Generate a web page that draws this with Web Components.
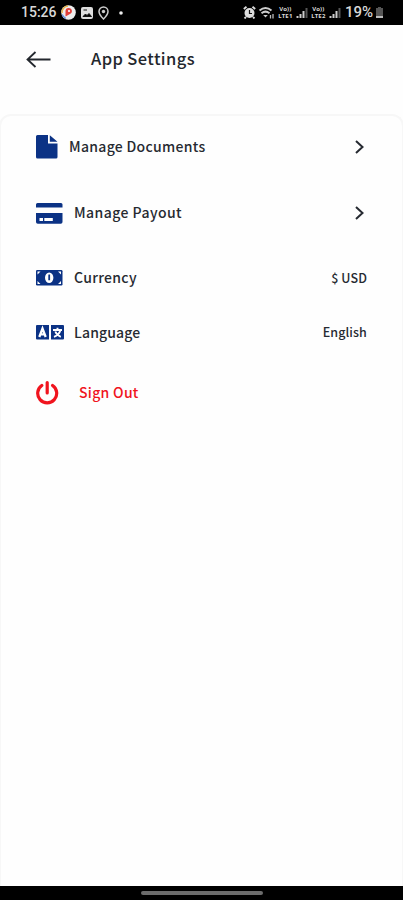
<!DOCTYPE html>
<html lang="en">
<head>
<meta charset="UTF-8">
<meta name="viewport" content="width=device-width, initial-scale=1.0">
<title>App Settings</title>
<style>
    html, body {
        margin: 0;
        height: 100%;
        overflow: hidden;
        background: #fefefe;
    }

    body {
        --navy: #0b3285;
        --ink: #262a31;
        --red: #f0141e;
        font-family: 'Noto Sans CJK SC', 'Noto Sans', sans-serif;
        color: var(--ink);
    }
</style>
</head>
<body>
<settings-screen></settings-screen>

<script>
const icons = {
    document: `<svg width="22" height="24" viewBox="0 0 22 24"><path fill="var(--navy)" d="M1.500 0H12v8.500h9.500V22a1.500 1.500 0 0 1-1.500 1.500H1.500A1.500 1.500 0 0 1 0 22V1.500A1.500 1.500 0 0 1 1.500 0zM13.800.2 21.500 6.800H13.800z"/></svg>`,
    card: `<svg width="27" height="21" viewBox="0 0 27 21"><path fill="var(--navy)" d="M1.500 0h23.500A1.500 1.500 0 0 1 26.500 1.500V4.500H0V1.500A1.500 1.500 0 0 1 1.500 0zM0 10h26.500v9a1.800 1.800 0 0 1-1.800 1.800H1.800A1.800 1.800 0 0 1 0 19z"/><path stroke="#fff" stroke-width="3" d="M3.500 16.500h3.500M8.300 16.500h8.500"/></svg>`,
    money: `<svg width="27" height="16" viewBox="0 0 27 16"><rect width="26.500" height="15.500" rx="1.200" fill="var(--navy)"/><ellipse cx="13.200" cy="7.700" rx="4.200" ry="5.200" fill="#fff"/><path fill="none" stroke="var(--navy)" stroke-width="1.800" d="M12.400 5.300h.8v5"/><path fill="#fff" d="M1.500 1.500H4.500L1.500 4.500zM25 1.500V4.500L22 1.500zM1.500 14v-3L4.500 14zM25 14h-3L25 11z"/></svg>`,
    language: `<svg width="28" height="15" viewBox="0 0 28 15"><path fill="var(--navy)" d="M1 0h12v14.500H1a1 1 0 0 1-1-1V1a1 1 0 0 1 1-1zM15 0h12a1 1 0 0 1 1 1v12.500a1 1 0 0 1-1 1H15z"/><path fill="none" stroke="#fff" stroke-width="2.300" d="M3.300 12 6.500 3.500 9.700 12M4.500 9.300h4"/><path fill="none" stroke="#fff" stroke-width="1.900" d="M17 5h9M21.500 2.800v2M24.300 5.500q-1.300 4.500-6.300 6.300M19.300 6.500q1.500 3.800 5.500 5.300"/></svg>`,
    power: `<svg width="23" height="24" viewBox="0 0 23 24"><path fill="none" stroke="var(--red)" stroke-width="3.200" stroke-linecap="round" d="M5.800 4.500a9.500 9.500 0 1 0 10.800 0M11.200 1.600v10.400"/></svg>`
};

class StatusBar extends HTMLElement {
    constructor() {
        super();
        this.shadowDOM = this.attachShadow({ mode: 'open' });
    }

    connectedCallback() {
        this.shadowDOM.innerHTML = `
            <style>
                :host {
                    display: flex;
                    align-items: center;
                    height: 25px;
                    padding: 0 19px 0 21px;
                    box-sizing: border-box;
                    background: #000;
                    color: #d8d8d8;
                    font: 500 14px/25px Roboto, sans-serif;
                }

                svg {
                    display: block;
                    flex: none;
                }

                .left, .right {
                    display: flex;
                    align-items: center;
                }

                .left {
                    gap: 4.500px;
                    flex: 1;
                }

                .right {
                    gap: 2px;
                }

                .sim {
                    display: grid;
                    font: 700 6px/7px 'Noto Sans', sans-serif;
                    letter-spacing: .2px;
                    width: 17px;
                }

                .sim span {
                    height: 7px;
                    overflow: hidden;
                    text-align: center;
                }

                .level {
                    margin-left: 2px;
                    font-size: 15px;
                }
            </style>

            <div class="left">
                <span>15:26</span>
                <svg width="15" height="15" viewBox="0 0 15 15"><circle cx="7.500" cy="7.500" r="7.300" fill="#eee"/><path d="M1 8A6.500 6.500 0 0 1 7 1" fill="none" stroke="#e9b44b" stroke-width="1.500"/><path d="M1.300 9.500A6.500 6.500 0 0 0 5 13.500" fill="none" stroke="#5a8be0" stroke-width="1.200"/><path d="M4.500 11.500V6a3.200 3.200 0 1 1 4 3.200z" fill="#e2413c"/><circle cx="8" cy="6" r="1.100" fill="#fff"/></svg>
                <svg width="12" height="12" viewBox="0 0 12 12"><rect width="12" height="12" rx="2" fill="#ddd"/><path d="M2 9.500 4.500 7l1.500 1.500L8 6.500l2.500 3zM2.500 3H6" stroke="#111"/></svg>
                <svg width="13" height="14" viewBox="0 0 13 14"><path d="M6.500 13Q2 8.500 2 5.500a4.500 4.500 0 0 1 9 0Q11 8.500 6.500 13z" fill="none" stroke="#ccc" stroke-width="1.500"/><circle cx="6.500" cy="5.500" r="1.700" fill="#ccc"/></svg>
                <svg width="12" height="4" viewBox="0 0 12 4"><circle cx="6" cy="2" r="1.800" fill="#eee"/></svg>
            </div>
            <div class="right">
                <svg width="13" height="13" viewBox="0 0 13 13"><circle cx="6.500" cy="7" r="5" fill="#ddd"/><path d="M.8 3 3.500.8M12.200 3 9.500.8M3 11l-1.500 1.500M10 11l1.500 1.500" stroke="#ddd" stroke-width="1.800"/><path d="M6.500 4v3.500h2.500" fill="none" stroke="#111" stroke-width="1.200"/></svg>
                <svg width="17" height="13" viewBox="0 0 17 13"><path d="M1.500 4.500q6-5 12 0M3.500 7.200q4-3.200 8 0" fill="none" stroke="#ccc" stroke-width="2"/><path d="M5.200 9h4.600L7.500 11.500z" fill="#ccc"/><path d="M12.500 9v3.500M15 8v4.500" stroke="#bbb" stroke-width="1.300"/></svg>
                <span class="sim"><span>Vo))</span><span>LTE1</span></span>
                <svg width="12" height="10" viewBox="0 0 12 10"><path d="M1.500 10V8M4.500 10V6M7.500 10V3" stroke="#ccc" stroke-width="2"/><path d="M10.500 10V0" stroke="#555" stroke-width="2"/></svg>
                <span class="sim"><span>Vo))</span><span>LTE2</span></span>
                <svg width="12" height="10" viewBox="0 0 12 10"><path d="M1.500 10V8M4.500 10V6M7.500 10V3" stroke="#ccc" stroke-width="2"/><path d="M10.500 10V0" stroke="#555" stroke-width="2"/></svg>
                <span class="level">19%</span>
                <svg width="9" height="12" viewBox="0 0 9 12"><path d="M3 0h3v1h2v8H1V1h2z" fill="#555"/><path d="M1 9h7v2H1z" fill="#bbb"/></svg>
            </div>
        `;
    }
}

class AppHeader extends HTMLElement {
    constructor() {
        super();
        this.shadowDOM = this.attachShadow({ mode: 'open' });
    }

    connectedCallback() {
        this.shadowDOM.innerHTML = `
            <style>
                :host {
                    display: flex;
                    align-items: center;
                    height: 68px;
                    padding-left: 26px;
                    color: #23272d;
                }

                svg {
                    display: block;
                    flex: none;
                }

                h1 {
                    margin: 0 0 2px 40px;
                    font-size: 16.500px;
                    font-weight: 500;
                    line-height: 24px;
                    letter-spacing: .4px;
                }
            </style>

            <svg width="25" height="18" viewBox="0 0 25 18"><path d="M24.500 9.500H2M9.500 2 1.500 9.500l8 7.500" fill="none" stroke="currentColor" stroke-width="1.800"/></svg>
            <h1><slot></slot></h1>
        `;
    }
}

class SettingsItem extends HTMLElement {
    constructor() {
        super();
        this.shadowDOM = this.attachShadow({ mode: 'open' });
    }

    connectedCallback() {
        this.shadowDOM.innerHTML = `
            <style>
                :host {
                    display: flex;
                    align-items: center;
                    height: var(--row, 70px);
                    padding: 0 35px;
                    cursor: pointer;
                }

                svg {
                    display: block;
                    flex: none;
                }

                .label {
                    flex: 1;
                    margin: 0 0 2px var(--gap, 11px);
                    font-size: 14px;
                    font-weight: 500;
                    line-height: 22px;
                    letter-spacing: var(--tracking, .3px);
                    white-space: nowrap;
                }

                .value {
                    font-size: 12.500px;
                    font-weight: 500;
                    line-height: 20px;
                    letter-spacing: .1px;
                    margin-bottom: 1px;
                }

                .chevron {
                    margin-right: 3px;
                }
            </style>

            ${icons[this.getAttribute('icon')]}
            <span class="label"><slot></slot></span>
            ${this.hasAttribute('link')
                ? '<svg class="chevron" width="9" height="14" viewBox="0 0 9 14"><path d="M1 1l6.500 6L1 13" fill="none" stroke="currentColor" stroke-width="2"/></svg>'
                : `<span class="value">${this.getAttribute('value') || ''}</span>`}
        `;
    }
}

class SettingsScreen extends HTMLElement {
    constructor() {
        super();
        this.shadowDOM = this.attachShadow({ mode: 'open' });
    }

    connectedCallback() {
        this.shadowDOM.innerHTML = `
            <style>
                :host {
                    display: flex;
                    flex-direction: column;
                    height: 100vh;
                }

                main {
                    flex: 1;
                    margin-top: 21px;
                    box-sizing: border-box;
                    border: 2px solid #f7f7f7;
                    border-bottom: 0;
                    border-radius: 12px 12px 0 0;
                    margin-inline: -1px;
                }

                .documents { --row: 62px; }
                .payout { --tracking: .45px; }
                .money { --row: 60px; }
                .language { --row: 49px; --gap: 10px; --tracking: .15px; }
                .sign-out { --row: 72px; --gap: 20px; color: var(--red); }

                footer {
                    display: flex;
                    justify-content: center;
                    align-items: center;
                    height: 14px;
                    background: #000;
                }

                .handle {
                    width: 122px;
                    height: 4px;
                    border-radius: 2px;
                    background: #6c6c6c;
                }
            </style>

            <status-bar></status-bar>
            <app-header>App Settings</app-header>
            <main>
                <settings-item class="documents" icon="document" link>Manage Documents</settings-item>
                <settings-item class="payout" icon="card" link>Manage Payout</settings-item>
                <settings-item class="money" icon="money" value="$ USD">Currency</settings-item>
                <settings-item class="language" icon="language" value="English">Language</settings-item>
                <settings-item class="sign-out" icon="power">Sign Out</settings-item>
            </main>
            <footer><div class="handle"></div></footer>
        `;
    }
}

customElements.define('status-bar', StatusBar);
customElements.define('app-header', AppHeader);
customElements.define('settings-item', SettingsItem);
customElements.define('settings-screen', SettingsScreen);
</script>
</body>
</html>
